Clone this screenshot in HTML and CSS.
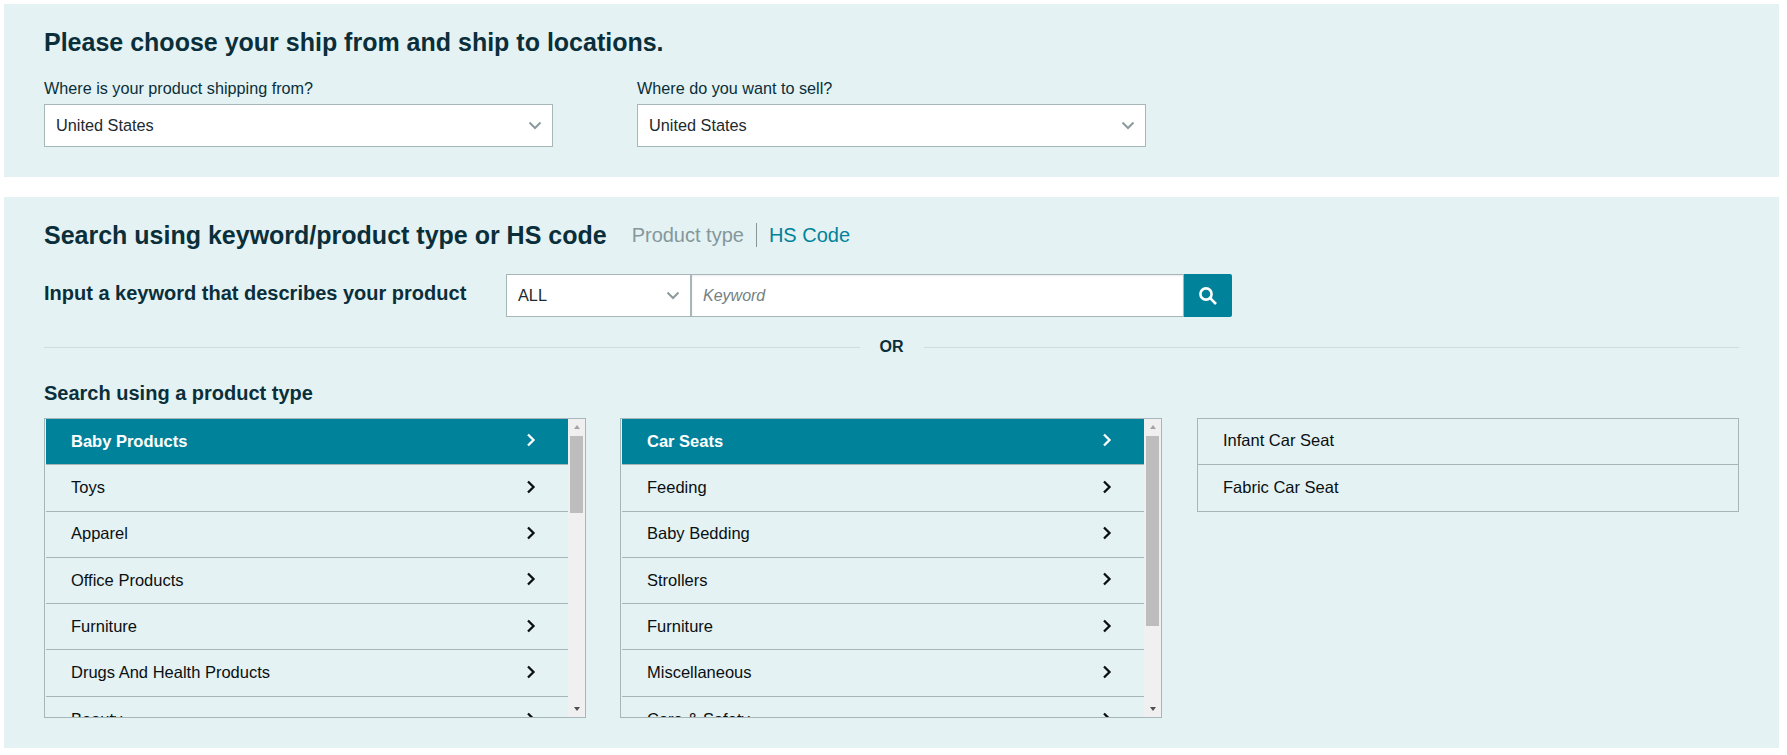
FILE: index.html
```html
<!DOCTYPE html>
<html lang="en">
<head>
    <meta charset="UTF-8">
    <title>Ship from and ship to</title>
    <link rel="stylesheet" href="styles.css">
</head>
<body>
    <section class="panel panel-locations">
        <h1 class="title">Please choose your ship from and ship to locations.</h1>
        <div class="location-row">
            <div class="location-field">
                <label class="field-label">Where is your product shipping from?</label>
                <div class="select">
                    <span>United States</span>
                    <svg class="select-arrow" viewBox="0 0 14 9"><path d="M1.5 1.5 7 7l5.5-5.5"/></svg>
                </div>
            </div>
            <div class="location-field">
                <label class="field-label">Where do you want to sell?</label>
                <div class="select">
                    <span>United States</span>
                    <svg class="select-arrow" viewBox="0 0 14 9"><path d="M1.5 1.5 7 7l5.5-5.5"/></svg>
                </div>
            </div>
        </div>
    </section>

    <section class="panel panel-search">
        <div class="search-head">
            <h2 class="subtitle">Search using keyword/product type or HS code</h2>
            <div class="tabs">
                <span class="tab">Product type</span>
                <span class="tab tab-link">HS Code</span>
            </div>
        </div>

        <div class="keyword-row">
            <div class="keyword-label">Input a keyword that describes your product</div>
            <div class="select select-small">
                <span>ALL</span>
                <svg class="select-arrow" viewBox="0 0 14 9"><path d="M1.5 1.5 7 7l5.5-5.5"/></svg>
            </div>
            <div class="keyword-input">Keyword</div>
            <button class="search-button">
                <svg viewBox="0 0 20 20"><circle cx="8" cy="8" r="5.6"/><path d="M12.2 12.2 18 18"/></svg>
            </button>
        </div>

        <div class="divider"><span>OR</span></div>

        <div class="keyword-label type-label">Search using a product type</div>

        <div class="type-columns">
            <div class="type-box">
                <ul class="type-list">
                    <li class="type-item active">Baby Products<svg class="chevron" viewBox="0 0 10 14"><path d="M2 1.5 7.5 7 2 12.5"/></svg></li>
                    <li class="type-item">Toys<svg class="chevron" viewBox="0 0 10 14"><path d="M2 1.5 7.5 7 2 12.5"/></svg></li>
                    <li class="type-item">Apparel<svg class="chevron" viewBox="0 0 10 14"><path d="M2 1.5 7.5 7 2 12.5"/></svg></li>
                    <li class="type-item">Office Products<svg class="chevron" viewBox="0 0 10 14"><path d="M2 1.5 7.5 7 2 12.5"/></svg></li>
                    <li class="type-item">Furniture<svg class="chevron" viewBox="0 0 10 14"><path d="M2 1.5 7.5 7 2 12.5"/></svg></li>
                    <li class="type-item">Drugs And Health Products<svg class="chevron" viewBox="0 0 10 14"><path d="M2 1.5 7.5 7 2 12.5"/></svg></li>
                    <li class="type-item">Beauty<svg class="chevron" viewBox="0 0 10 14"><path d="M2 1.5 7.5 7 2 12.5"/></svg></li>
                </ul>
                <div class="scrollbar">
                    <span class="scroll-up"></span>
                    <div class="scroll-track"><div class="scroll-thumb thumb-short"></div></div>
                    <span class="scroll-down"></span>
                </div>
            </div>

            <div class="type-box">
                <ul class="type-list">
                    <li class="type-item active">Car Seats<svg class="chevron" viewBox="0 0 10 14"><path d="M2 1.5 7.5 7 2 12.5"/></svg></li>
                    <li class="type-item">Feeding<svg class="chevron" viewBox="0 0 10 14"><path d="M2 1.5 7.5 7 2 12.5"/></svg></li>
                    <li class="type-item">Baby Bedding<svg class="chevron" viewBox="0 0 10 14"><path d="M2 1.5 7.5 7 2 12.5"/></svg></li>
                    <li class="type-item">Strollers<svg class="chevron" viewBox="0 0 10 14"><path d="M2 1.5 7.5 7 2 12.5"/></svg></li>
                    <li class="type-item">Furniture<svg class="chevron" viewBox="0 0 10 14"><path d="M2 1.5 7.5 7 2 12.5"/></svg></li>
                    <li class="type-item">Miscellaneous<svg class="chevron" viewBox="0 0 10 14"><path d="M2 1.5 7.5 7 2 12.5"/></svg></li>
                    <li class="type-item">Care &amp; Safety<svg class="chevron" viewBox="0 0 10 14"><path d="M2 1.5 7.5 7 2 12.5"/></svg></li>
                </ul>
                <div class="scrollbar">
                    <span class="scroll-up"></span>
                    <div class="scroll-track"><div class="scroll-thumb thumb-long"></div></div>
                    <span class="scroll-down"></span>
                </div>
            </div>

            <div class="type-box type-box-last">
                <ul class="type-list">
                    <li class="type-item">Infant Car Seat</li>
                    <li class="type-item">Fabric Car Seat</li>
                </ul>
            </div>
        </div>
    </section>
</body>
</html>
```

FILE: styles.css
```css
* {
    margin: 0;
    padding: 0;
    box-sizing: border-box;
    font-family: "Liberation Sans", Arial, sans-serif;
}

body {
    background-color: #fff;
    padding: 4px 8px 7px 4px;
    color: #0a2f3a;
}

.panel {
    background-color: #e4f2f3;
    padding: 0 40px;
}

/* ship from / ship to */
.panel-locations {
    height: 173px;
    padding-top: 23px;
    margin-bottom: 20px;
}

.title {
    font-size: 25px;
    line-height: 30px;
    font-weight: bold;
}

.location-row {
    display: flex;
    gap: 84px;
    margin-top: 21px;
}

.location-field {
    width: 509px;
}

.field-label {
    display: block;
    font-size: 16.2px;
    line-height: 20px;
    margin-bottom: 6px;
}

.select {
    height: 43px;
    background-color: #fff;
    border: 1px solid #a6b6b9;
    padding: 0 10px 0 11px;
    display: flex;
    align-items: center;
    justify-content: space-between;
    font-size: 16.3px;
    color: #1d2a2e;
}

.select-arrow {
    width: 14px;
    height: 9px;
    fill: none;
    stroke: #8d9a9d;
    stroke-width: 2;
}

/* search panel */
.panel-search {
    height: 551px;
    padding-top: 23px;
}

.search-head {
    display: flex;
    align-items: center;
    gap: 25px;
}

.subtitle {
    font-size: 25px;
    line-height: 30px;
    font-weight: bold;
}

.tabs {
    display: flex;
    align-items: center;
}

.tab {
    font-size: 20px;
    line-height: 24px;
    color: #84979b;
    padding-right: 12px;
}

.tab-link {
    color: #00829b;
    border-left: 1px solid #84979b;
    padding: 0 0 0 12px;
}

.keyword-row {
    display: flex;
    align-items: center;
    margin-top: 24px;
}

.keyword-label {
    font-size: 20px;
    line-height: 24px;
    font-weight: bold;
}

.keyword-row .keyword-label {
    width: 462px;
    padding-bottom: 6px;
}

.select-small {
    width: 185px;
}

.keyword-input {
    width: 493px;
    height: 43px;
    background-color: #fff;
    border: 1px solid #a6b6b9;
    padding-left: 11px;
    display: flex;
    align-items: center;
    font-size: 16px;
    font-style: italic;
    color: #757f82;
    box-shadow: inset 0 1px 2px rgba(0, 0, 0, 0.08);
}

.search-button {
    width: 48px;
    height: 43px;
    background-color: #00829b;
    border: none;
    border-radius: 0 2px 2px 0;
    display: flex;
    align-items: center;
    justify-content: center;
}

.search-button svg {
    width: 20px;
    height: 20px;
    fill: none;
    stroke: #fff;
    stroke-width: 2.6;
}

.divider {
    display: flex;
    align-items: center;
    margin-top: 20px;
    font-size: 16px;
    line-height: 20px;
    font-weight: bold;
}

.divider::before,
.divider::after {
    content: "";
    flex: 1;
    height: 1px;
    background-color: #cddcdd;
}

.divider span {
    padding: 0 20px;
}

.type-label {
    margin-top: 24px;
}

.type-columns {
    display: flex;
    gap: 34px;
    margin-top: 13px;
}

.type-box {
    width: 542px;
    height: 300px;
    border: 1px solid #a6b6b9;
    padding-left: 1px;
    display: flex;
    overflow: hidden;
}

.type-box-last {
    height: 94px;
    margin-left: 1px;
    padding-left: 0;
}

.type-list {
    flex: 1;
    list-style: none;
}

.type-item {
    height: 46.3px;
    padding: 0 32px 0.6px 25px;
    border-bottom: 1px solid #a6b6b9;
    display: flex;
    align-items: center;
    justify-content: space-between;
    font-size: 16.5px;
    color: #0a0f12;
}

.type-box-last .type-item {
    padding-left: 25px;
    padding-bottom: 1.5px;
}

.type-item:last-child {
    border-bottom: 0;
}

.type-item.active {
    background-color: #00829b;
    color: #fff;
    font-weight: bold;
}

.chevron {
    width: 10px;
    height: 14px;
    margin-bottom: 2px;
    fill: none;
    stroke: #0a0f12;
    stroke-width: 2.3;
}

.active .chevron {
    stroke: #fff;
}

/* fake scrollbar */
.scrollbar {
    width: 17px;
    background-color: #f0f0f0;
    display: flex;
    flex-direction: column;
    align-items: center;
    flex-shrink: 0;
}

.scroll-up,
.scroll-down {
    width: 0;
    height: 0;
    border-left: 3.5px solid transparent;
    border-right: 3.5px solid transparent;
    margin: 6px 0;
}

.scroll-up {
    border-bottom: 4px solid #a3a3a3;
}

.scroll-down {
    border-top: 4px solid #505050;
}

.scroll-track {
    flex: 1;
    width: 13px;
}

.scroll-thumb {
    background-color: #bdbdbd;
    margin-top: 1px;
}

.thumb-short {
    height: 77px;
}

.thumb-long {
    height: 190px;
}
```
